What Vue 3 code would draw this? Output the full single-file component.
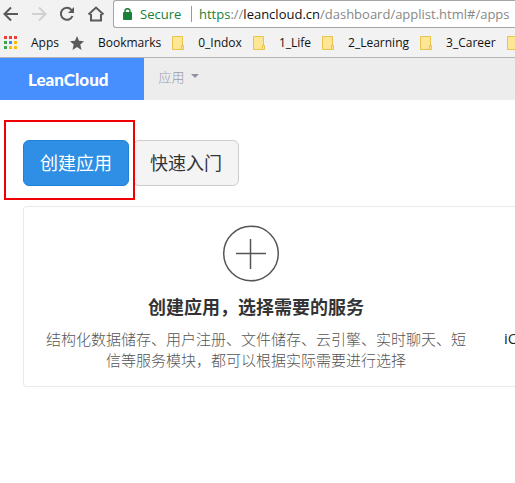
<script setup>
const appDots = ['#ea4335', '#ea4335', '#ea4335', '#34a853', '#4285f4', '#fbbc05', '#34a853', '#fbbc05', '#fbbc05']
const folders = ['0_Indox', '1_Life', '2_Learning', '3_Career', '']
</script>

<template>
  <div class="window">
    <header class="browser">
      <div class="toolbar">
        <button class="tool" aria-label="Back">
          <svg width="16" height="16" viewBox="0 0 16 16"><path d="M15 8H2M8 1.5L1.500 8L8 14.500" /></svg>
        </button>
        <button class="tool off" aria-label="Forward" disabled>
          <svg width="16" height="16" viewBox="0 0 16 16"><path d="M1 8H14M8 1.500L14.500 8L8 14.500" /></svg>
        </button>
        <button class="tool" aria-label="Reload">
          <svg width="16" height="16" viewBox="0 0 16 16"><path d="M13.500 10A6 6 0 1 1 12.400 3.800L14 5.500" /><path class="solid" d="M15 1V7H9Z" /></svg>
        </button>
        <button class="tool" aria-label="Home">
          <svg width="18" height="16" viewBox="0 0 18 16"><path d="M1.500 8.500L9 1.500L16.500 8.500M4 8V14.500H14V8" /></svg>
        </button>
        <div class="address">
          <svg class="lock" width="9" height="12" viewBox="0 0 9 12"><rect x="0" y="4" width="9" height="8" rx="1" fill="#188038" /><path d="M2 5V3A2.500 2.300 0 0 1 7 3V5" fill="none" stroke="#188038" stroke-width="1.500" /></svg>
          <span class="secure">Secure</span>
          <span class="bar"></span>
          <div class="url" role="textbox" aria-label="Address" contenteditable="true" spellcheck="false"><span class="scheme">https</span><span class="dim">://</span>leancloud.cn<span class="dim">/dashboard/applist.html#/apps</span></div>
        </div>
      </div>
      <nav class="bookmarks" aria-label="Bookmarks">
        <a class="mark" href="#apps">
          <svg width="13" height="13" viewBox="0 0 13 13">
            <rect v-for="(c, i) in appDots" :key="i" :x="(i % 3) * 5" :y="Math.floor(i / 3) * 5" width="3" height="3" :fill="c" />
          </svg>
          Apps
        </a>
        <a class="mark" href="#bookmarks">
          <svg width="14" height="14" viewBox="0 0 14 14"><path fill="#5a5a5a" d="M7 0L9 4.800L14 5.200L10.300 8.600L11.500 14L7 11L2.500 14L3.700 8.600L0 5.200L5 4.800Z" /></svg>
          Bookmarks
        </a>
        <a v-for="name in folders" :key="name" class="mark" href="#folder" :aria-label="name || 'Folder'">
          <svg width="12" height="14" viewBox="0 0 12 14"><path d="M.5.5H10.500V9.500H11.500V13.500H.5Z" fill="#ffe694" stroke="#e8c34e" /><path d="M9.500 13V9.500H11" fill="none" stroke="#e8c34e" /></svg>
          {{ name }}
        </a>
      </nav>
    </header>

    <nav class="site" aria-label="LeanCloud">
      <a class="brand" href="#home">LeanCloud</a>
      <button class="menu">应用 <span class="caret"></span></button>
    </nav>

    <main class="page">
      <div class="actions">
        <div class="marked"><button class="btn primary">创建应用</button></div>
        <button class="btn">快速入门</button>
      </div>
      <section class="card">
        <article class="step">
          <svg class="plus" width="68" height="58" viewBox="0 0 68 58"><circle cx="29" cy="28.500" r="27.300" /><path d="M14 28.500H44M28.500 14V44" /></svg>
          <h2>创建应用，选择需要的服务</h2>
          <p>结构化数据储存、用户注册、文件储存、云引擎、实时聊天、短信等服务模块，都可以根据实际需要进行选择</p>
        </article>
        <article class="next"><p>iOS</p></article>
      </section>
    </main>
  </div>
</template>

<style>
body {
  background: #fff;
}
</style>

<style scoped>
.window {
  overflow: hidden;
  font-family: "Open Sans", "Noto Sans CJK SC", sans-serif;
  color: #333;
}
button {
  font-family: inherit;
  margin: 0;
  cursor: pointer;
}
a {
  color: inherit;
  text-decoration: none;
}
svg {
  display: block;
  flex: none;
}
.browser {
  background: #f2f2f2;
  border-bottom: 1px solid #b6b4b6;
}
.toolbar {
  display: flex;
  align-items: center;
  gap: 12px;
  height: 28px;
  padding-left: 3px;
}
.tool {
  display: flex;
  padding: 0;
  border: 0;
  background: none;
}
.tool path {
  fill: none;
  stroke: #5a5a5a;
  stroke-width: 2;
}
.tool .solid {
  fill: #5a5a5a;
  stroke: none;
}
.tool.off path {
  stroke: #d0d0d0;
}
.address {
  display: flex;
  align-items: center;
  flex: 1;
  min-width: 0;
  height: 26px;
  margin-left: -4px;
  padding-left: 9px;
  border: 1px solid #a6a6a6;
  border-right: 0;
  border-radius: 3px 0 0 3px;
  background: #fff;
  font-size: 13px;
  white-space: nowrap;
  overflow: hidden;
}
.secure {
  margin-left: 8px;
  width: 42px;
  color: #188038;
}
.bar {
  width: 1px;
  height: 16px;
  margin: 0 7px 0 9px;
  background: #999;
}
.url {
  color: #111;
  outline: 0;
}
.scheme {
  color: #188038;
}
.dim {
  color: #888;
}
.bookmarks {
  display: flex;
  align-items: center;
  gap: 11px;
  height: 29px;
  padding-left: 4px;
  color: #111;
  font-size: 12px;
  white-space: nowrap;
}
.mark {
  display: flex;
  align-items: center;
  flex: none;
  gap: 14px;
}
.site {
  display: flex;
  height: 42px;
  background: #ededed;
}
.brand {
  display: flex;
  align-items: center;
  padding: 0 35px 0 28px;
  background: #478fff;
  color: #fff;
  font-family: Lato, sans-serif;
  font-size: 17px;
  font-weight: 900;
}
.menu {
  display: flex;
  align-items: center;
  gap: 6px;
  padding: 0 15px 6px;
  border: 0;
  background: none;
  color: #9a9cab;
  font-family: "Noto Sans CJK SC", sans-serif;
  font-size: 13px;
  font-weight: 300;
}
.caret {
  border: 4px solid transparent;
  border-top-color: #9092a4;
  border-bottom: 0;
}
.page {
  padding: 40px 0 96px 23px;
}
.actions {
  display: flex;
  gap: 4px;
  margin-bottom: 20px;
}
.marked {
  position: relative;
}
.marked::after {
  content: "";
  position: absolute;
  inset: -20px -6px -14px -19px;
  border: 2px solid #f00000;
  pointer-events: none;
}
.btn {
  height: 46px;
  padding: 0 16px;
  border: 1px solid #ccc;
  border-radius: 6px;
  background: #f4f4f4;
  color: #333;
  font-size: 18px;
  line-height: 24px;
}
.primary {
  border-color: #1e81dc;
  background: #2f8fe4;
  color: #fff;
}
.card {
  display: flex;
  border: 1px solid #eaeaea;
  border-right: 0;
  border-radius: 4px 0 0 4px;
}
.step {
  flex: 0 0 464px;
  box-sizing: border-box;
  padding: 18px 22px 15px;
  text-align: center;
}
.next {
  padding: 121px 0 0 16px;
  white-space: nowrap;
}
.plus {
  margin: 0 auto;
  fill: none;
  stroke: #555;
  stroke-width: 1.5;
}
h2 {
  margin: 11px 0 9px;
  font-size: 18px;
  line-height: 26px;
  font-weight: 700;
}
p {
  margin: 0;
  color: #555;
  font-size: 15px;
  line-height: 21px;
  font-weight: 300;
}
.next p {
  color: #222;
  font-weight: 400;
}
</style>
